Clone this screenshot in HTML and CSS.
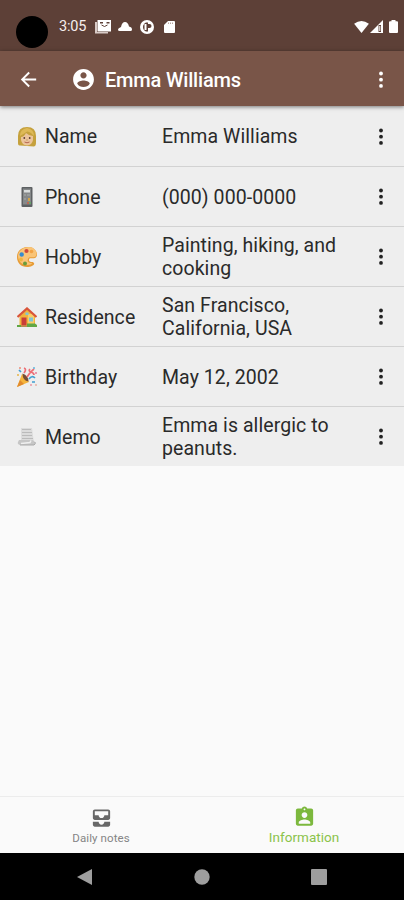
FILE: index.html
```
<!DOCTYPE html>
<html lang="en">
<head>
<meta charset="utf-8">
<title>Emma Williams</title>
<link rel="stylesheet" href="styles.css">
</head>
<body>
<svg class="defs" width="0" height="0"><symbol id="more" viewBox="0 0 24 24"><circle cx="12" cy="5.500" r="1.900"/><circle cx="12" cy="11.700" r="1.900"/><circle cx="12" cy="17.900" r="1.900"/></symbol></svg>
<div class="status">
  <span class="camera"></span>
  <span class="time">3:05</span>
  <svg class="s-news" viewBox="0 0 16 14"><path fill="#d9cbc7" d="M0 2h2v10h11v1.500H0z"/><path fill="#fff" d="M2.500 0H16v11.500H2.500z"/><path fill="#5d4037" d="M5 2h3v1.500H5zM11.500 2h3v1.500h-3z"/><path fill="none" stroke="#5d4037" d="M6.500 5q3 3 6 0"/></svg>
  <svg class="s-cloud" viewBox="0 0 14 9"><path fill="#fff" d="M1.500 9Q0 9 0 7.500T3 5Q4 0 7 0t4 4.500q3 .5 3 3Q14 9 12.500 9z"/></svg>
  <svg class="s-circle" viewBox="0 0 14 14"><circle cx="7" cy="7" r="7" fill="#fff"/><path fill="#5d4037" d="M6 2.500h2v9H6Q3 10 3 7t3-4.500z"/><path fill="#fff" d="M4.500 4h2v6h-2z"/><path fill="#5d4037" d="M8 4h1.500a2 2 0 0 1 0 4H8z"/></svg>
  <svg class="s-card" viewBox="0 0 11 12"><path fill="#fff" d="M4 0h6q1 0 1 1v10q0 1-1 1H1q-1 0-1-1V4z"/><path stroke="#b9a59e" d="M4.500 1.500v1.500M6.500 1.500v1.500M8.500 1.500v1.500"/></svg>
  <span class="grow"></span>
  <svg class="s-wifi" viewBox="0 0 16 13"><path fill="#fff" d="M0 3Q8-3 16 3L8 13z"/></svg>
  <svg class="s-signal" viewBox="0 0 13 13"><path fill="#fff" d="M0 13L13 0v13z"/><path fill="#5d4037" d="M8.500 5H11v7H8.500z"/><path fill="#fff" d="M9.300 6h1v5h-1z"/></svg>
  <svg class="s-battery" viewBox="0 0 9 13"><path fill="#fff" d="M2.500 0h4v1.300H8q1 0 1 1V12q0 1-1 1H1q-1 0-1-1V2.300q0-1 1-1h1.500z"/></svg>
</div>
<header class="appbar">
  <svg class="back" viewBox="0 0 24 24"><path d="M20 11H7.830l5.590-5.590L12 4l-8 8 8 8 1.410-1.410L7.830 13H20v-2z"/></svg>
  <svg class="account" viewBox="0 0 24 24"><path d="M12 2C6.480 2 2 6.480 2 12s4.480 10 10 10 10-4.480 10-10S17.520 2 12 2zm0 3c1.660 0 3 1.340 3 3s-1.340 3-3 3-3-1.340-3-3 1.340-3 3-3zm0 14.200c-2.500 0-4.710-1.280-6-3.220.03-1.990 4-3.080 6-3.080 1.990 0 5.970 1.090 6 3.080-1.290 1.940-3.500 3.220-6 3.220z"/></svg>
  <h1>Emma Williams</h1>
  <svg class="more"><use href="#more"/></svg>
</header>
<main>
  <div class="row">
    <svg class="emoji" viewBox="0 0 20 20"><path fill="#c5a13d" d="M3 18.500Q.800 19 1 15V9Q1 0 10 0t9 9v6q.200 4-2 4.500z"/><path fill="#deb957" d="M3 9Q3 2 10 1q7 1 7 8l-3-3q-4-3-6 0z"/><path fill="#ecc49b" d="M4 10q3 0 5-4 3 3 7 3v4q-1 5-6 5.500Q5 18 4 13z"/><circle cx="7.300" cy="11" r=".9" fill="#5b3e31"/><circle cx="12.700" cy="11" r=".9" fill="#5b3e31"/><path fill="none" stroke="#b56550" d="M7.500 15q2.500 1.600 5 0"/><path fill="#c39b72" d="M9 12.500h2v1H9z"/></svg>
    <span class="label">Name</span><span class="value">Emma Williams</span><svg class="more"><use href="#more"/></svg>
  </div>
  <div class="row">
    <svg class="emoji" viewBox="0 0 20 20"><rect x="4.500" y="0" width="11" height="20" rx="1" fill="#5d6062"/><rect x="6" y="1.500" width="8" height="16" fill="#858889"/><path fill="#d9dddd" d="M7 3h6v2.500H7z"/><path fill="#979a9a" d="M7 7h2v2H7zm3 0h3v2h-3zM7 11h2v2H7z"/><path fill="#d0a34a" d="M11 11h2v3h-2z"/><path fill="#bd6554" d="M10 15h2v2h-2z"/><path fill="#67a66a" d="M12 15h2v2h-2z"/></svg>
    <span class="label">Phone</span><span class="value">(000) 000-0000</span><svg class="more"><use href="#more"/></svg>
  </div>
  <div class="row">
    <svg class="emoji" viewBox="0 0 20 20"><path fill="#e79c36" d="M12 0C5-.500 0 4 0 10c0 6 4 10 10 10 4 0 8-2 7-4-1-2-5 0-5-3 0-3 3-1 6-2 5-3 0-11-6-11z"/><path fill="#f9c477" d="M12 0C6 0 1 4 1 9c0 5 4 9 9 9 3 0 5-1 5-2-4 0-5-2-4-4 1-3 4-1 7-2 4-3 0-10-6-10z"/><circle cx="9.500" cy="4" r="2.100" fill="#cf493d"/><circle cx="4.700" cy="7.500" r="2.200" fill="#378bd0"/><circle cx="14.500" cy="4.500" r="1.800" fill="#f2a244"/><circle cx="4" cy="12.500" r="1.900" fill="#f1b440"/><circle cx="8" cy="16.500" r="2" fill="#689c3b"/></svg>
    <span class="label">Hobby</span><span class="value">Painting, hiking, and cooking</span><svg class="more"><use href="#more"/></svg>
  </div>
  <div class="row">
    <svg class="emoji" viewBox="0 0 20 20"><path fill="#f1b43c" d="M2.500 9L10 2l8 7v10h-15.500z"/><path fill="#f9cd68" d="M11 7h6v11h-6z"/><path fill="none" stroke="#d9553a" stroke-width="2.300" d="M.500 10L10 1.500l9.500 8.500"/><path fill="#c93d38" d="M4.500 10.500h5v8h-5z"/><path fill="#82c4d5" d="M12 10.500h4v4h-4zM8.500 5.500h3v2.500h-3z"/><path fill="#61a744" d="M0 18h4v2H0zm10-1.500h8L20 18v2H10z"/><path fill="#b68a55" d="M4 18.500h6V20H4z"/></svg>
    <span class="label">Residence</span><span class="value">San Francisco, California, USA</span><svg class="more"><use href="#more"/></svg>
  </div>
  <div class="row">
    <svg class="emoji" viewBox="0 0 20 20"><path fill="#f5b43c" d="M5 7q4 3 7 8L0 20z"/><path fill="#e18a2d" d="M3 13l4 4-7 3z"/><path fill="#744d36" d="M5.500 6.500q6 2 6 8-6-1-6-8z"/><path fill="none" stroke="#ed6e75" stroke-width="1.700" d="M7 6q3-4 0-5M10 10q3-5 7-8M13 2q-2 2 1 3t3 3"/><path fill="none" stroke="#429fd1" stroke-width="1.700" d="M2 3l2 2M12 12q3-4 6-1M15 15h3"/><circle cx="3" cy="1" r="1" fill="#ef8d76"/><circle cx="17" cy="1" r="1" fill="#62b6dc"/><circle cx="19" cy="6" r="1" fill="#e77a98"/><circle cx="14" cy="18" r="1" fill="#e997a6"/><circle cx="19" cy="18" r="1" fill="#e7b2a3"/><circle cx="1" cy="8" r="1" fill="#e6b447"/></svg>
    <span class="label">Birthday</span><span class="value">May 12, 2002</span><svg class="more"><use href="#more"/></svg>
  </div>
  <div class="row">
    <svg class="emoji" viewBox="0 0 20 20"><path fill="#dcdcdc" d="M4 1h11l2 15H2q3-3 2-8z"/><path fill="none" stroke="#bbb" d="M5 2.500h9M5 5.500h10M5 8.500h10M5 11.500h11"/><path fill="#c6c6c6" d="M2 13h13q4 1 3 5H3q-3-1-2-3z"/><path fill="none" stroke="#efefef" stroke-width="1.500" d="M4 16.500l9-1 1-2"/><path fill="none" stroke="#aaa" d="M3 18h14q2-1 1-3"/></svg>
    <span class="label">Memo</span><span class="value">Emma is allergic to peanuts.</span><svg class="more"><use href="#more"/></svg>
  </div>
</main>
<nav class="tabs">
  <div class="tab">
    <svg viewBox="0 0 24 24"><path d="M19 3H5c-1.100 0-2 .9-2 2v7c0 1.100.9 2 2 2h14c1.100 0 2-.9 2-2V5c0-1.100-.9-2-2-2zm0 6h-4c0 1.620-1.380 3-3 3s-3-1.380-3-3H5V5h14v4zm-4 7h6v3c0 1.100-.9 2-2 2H5c-1.100 0-2-.9-2-2v-3h6c0 1.660 1.340 3 3 3s3-1.340 3-3z"/></svg>
    <span>Daily notes</span>
  </div>
  <div class="tab active">
    <svg viewBox="0 0 24 24"><path d="M19 3h-4.180C14.400 1.840 13.300 1 12 1c-1.300 0-2.400.84-2.820 2H5c-1.100 0-2 .9-2 2v14c0 1.100.9 2 2 2h14c1.100 0 2-.9 2-2V5c0-1.100-.9-2-2-2zm-7 0c.55 0 1 .45 1 1s-.45 1-1 1-1-.45-1-1 .45-1 1-1zm0 4c1.660 0 3 1.340 3 3s-1.340 3-3 3-3-1.340-3-3 1.340-3 3-3zm6 12H6v-1.400c0-2 4-3.100 6-3.100s6 1.100 6 3.100V19z"/></svg>
    <span>Information</span>
  </div>
</nav>
<footer class="system">
  <svg viewBox="0 0 16 16"><path d="M15 0v16L0 8z"/></svg>
  <svg viewBox="0 0 16 16"><circle cx="8" cy="8" r="7.700"/></svg>
  <svg viewBox="0 0 16 16"><rect width="16" height="16" rx="1"/></svg>
</footer>
</body>
</html>
```
FILE: styles.css
```
* { box-sizing: border-box; }
body {
  margin: 0;
  width: 404px;
  height: 900px;
  overflow: hidden;
  display: flex;
  flex-direction: column;
  background: #fafafa;
  font-family: Roboto, "Liberation Sans", sans-serif;
  color: #2a2a2a;
}
svg { display: block; flex: none; }
.defs { display: none; }
.status {
  height: 51px;
  flex: none;
  display: flex;
  align-items: center;
  padding: 2px 7px 0 16px;
  background: #5d4037;
}
.camera { width: 32px; height: 32px; margin-top: 10px; border-radius: 50%; background: #000; }
.time { width: 36px; margin-left: 11px; font-size: 14.500px; letter-spacing: -.2px; color: #f5efed; }
.s-news { width: 16px; height: 14px; }
.s-cloud { width: 14px; height: 9px; margin-left: 7px; }
.s-circle { width: 14px; height: 14px; margin-left: 8px; }
.s-card { width: 11px; height: 12px; margin-left: 10px; }
.grow { flex: 1; }
.s-wifi { width: 15px; height: 12px; }
.s-signal { width: 13px; height: 13px; margin-left: 1px; }
.s-battery { width: 9px; height: 13px; margin: 0 -1px 0 6px; }
.appbar {
  position: relative;
  height: 55px;
  flex: none;
  display: flex;
  align-items: center;
  padding: 2px 11px 0 17px;
  background: #795548;
  box-shadow: 0 1px 4px rgba(0, 0, 0, .5);
  fill: #fff;
}
.back { width: 23px; height: 23px; }
.account { width: 25px; height: 25px; margin-left: 31px; }
h1 { flex: 1; margin: 0 0 0 9px; font-size: 20px; font-weight: 500; letter-spacing: -.2px; color: #fff; white-space: nowrap; }
.more { width: 24px; height: 24px; }
.row {
  height: 60px;
  display: flex;
  align-items: center;
  padding: 1px 11px 0 17px;
  border-bottom: 1px solid #d2d2d2;
  background: #eee;
  font-size: 19.500px;
  line-height: 23px;
  fill: #222;
}
.row:first-child { height: 61px; }
.row:last-child { height: 59px; border-bottom: 0; }
.emoji { width: 20px; height: 20px; }
.label { width: 117px; margin-left: 8px; letter-spacing: .05px; }
.value { width: 190px; letter-spacing: .07px; }
.row .more { margin-left: auto; }
.tabs {
  height: 57px;
  flex: none;
  display: flex;
  margin-top: auto;
  border-top: 1px solid #ececec;
}
.tab {
  width: 202px;
  display: flex;
  flex-direction: column;
  align-items: center;
  padding-top: 9px;
  font-size: 11.500px;
  line-height: 15px;
  letter-spacing: .1px;
  color: #858585;
  fill: #686868;
}
.tab svg { width: 23px; height: 24px; }
.tab span { margin-top: 1px; }
.active { padding: 8px 0 0 2px; font-size: 13.500px; letter-spacing: .05px; color: #8bc34a; fill: #7cb83d; }
.system {
  height: 47px;
  flex: none;
  display: flex;
  justify-content: space-between;
  align-items: center;
  padding: 1px 77px 0;
  background: #000;
  fill: #9e9e9e;
}
.system svg { width: 16px; height: 16px; }
```
